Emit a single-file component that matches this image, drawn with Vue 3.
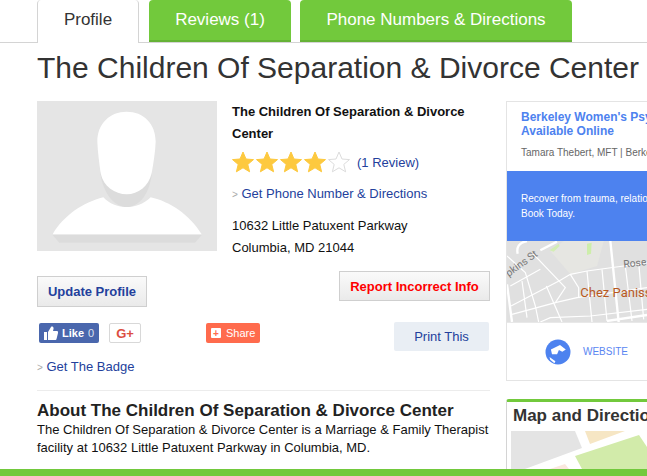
<script setup>
const stars = [1, 2, 3, 4, 5]
const starPoints = '11,1 14,8 21.5,8.6 15.8,13.4 17.6,20.8 11,16.8 4.4,20.8 6.2,13.4 0.5,8.6 8,8'
const tabs = ['Reviews (1)', 'Phone Numbers & Directions']
</script>

<template>
  <div class="page">
    <nav class="tabs">
      <a class="tab active">Profile</a>
      <a v-for="t in tabs" :key="t" class="tab green">{{ t }}</a>
    </nav>
    <h1 class="title">The Children Of Separation &amp; Divorce Center</h1>

    <div class="columns">
      <main class="main">
        <section class="summary">
          <svg class="photo" viewBox="51 18 540 450" width="180" height="150">
            <rect x="51" y="18" width="540" height="450" fill="#e5e5e5" />
            <path d="M98 418C130 362 190 322 250 307C270 328 295 336 320 336C345 336 370 328 392 307C450 320 510 360 545 418Z" fill="#fff" />
            <path d="M98 420H545L525 443H118Z" fill="#dcdcdc" />
            <path d="M240 230C250 300 285 336 320 336C355 336 390 300 396 230Z" fill="#dcdcdc" />
            <path d="M232 140C232 85 270 50 320 50C370 50 407 85 407 140C406 170 400 205 395 235C385 275 355 298 320 298C285 298 250 275 242 235C238 205 233 170 232 140Z" fill="#fff" />
          </svg>
          <div class="info">
            <div class="name">The Children Of Separation &amp; Divorce Center</div>
            <div class="rating">
              <svg v-for="s in stars" :key="s" class="star" viewBox="0 0 22 22" width="22" height="22">
                <polygon :points="starPoints" :fill="s < 5 ? '#fdc93f' : '#fff'" :stroke="s < 5 ? '#fdc93f' : '#dcdcdc'" />
              </svg>
              <a class="link review">(1 Review)</a>
            </div>
            <div class="more"><span class="caret">&gt;</span> <a class="link">Get Phone Number &amp; Directions</a></div>
            <div class="address">10632 Little Patuxent Parkway<br />Columbia, MD 21044</div>
          </div>
        </section>

        <div class="actions">
          <button class="btn update">Update Profile</button>
          <button class="btn report">Report Incorrect Info</button>
        </div>

        <div class="social">
          <span class="fb">
            <svg viewBox="0 0 14 14" width="14" height="14"><path d="M0 6H3V14H0ZM4 6L7 1C8 0 10 1 9.500 3L9 5H13C14 5 14.300 6 14 7L12.500 13C12.300 13.700 12 14 11 14H4Z" fill="#fff" /></svg>
            <b>Like</b><i>0</i>
          </span>
          <span class="gplus">G+</span>
          <span class="share"><em>+</em>Share</span>
          <button class="print">Print This</button>
        </div>

        <div class="badge"><span class="caret">&gt;</span> <a class="link">Get The Badge</a></div>

        <section class="about">
          <h2>About The Children Of Separation &amp; Divorce Center</h2>
          <p>The Children Of Separation &amp; Divorce Center is a Marriage &amp; Family Therapist facility at 10632 Little Patuxent Parkway in Columbia, MD.</p>
        </section>
      </main>

      <aside class="side">
        <div class="ad">
          <div class="ad-head">
            <div class="ad-title">Berkeley Women's Psychotherapy<br />Available Online</div>
            <div class="ad-by">Tamara Thebert, MFT | Berkeley, CA</div>
          </div>
          <div class="ad-blue">Recover from trauma, relationship issues and more.<br />Book Today.</div>
          <svg class="ad-map" viewBox="0 0 420 243" width="140" height="81">
            <rect width="420" height="243" fill="#e0e0e0" />
            <path d="M130 30L170 0H290L270 75L190 100Z" fill="#e6e6e2" />
            <path d="M128 28L155 8L158 15L140 32Z" fill="#d3eeb5" />
            <path d="M240 8L254 5L252 38L240 42Z" fill="#cdeeaa" />
            <g fill="none" stroke="#fff" stroke-width="3.500">
              <path d="M10 135L100 85" />
              <path d="M12 195L160 118L190 100L240 90L350 75L420 65" />
              <path d="M75 35L175 140L145 185L15 220" />
              <path d="M0 45L55 95L85 195L95 243" />
              <path d="M118 135L165 243" />
              <path d="M190 100L215 140L215 170" />
              <path d="M45 120L60 230" />
              <path d="M145 185L210 170L420 140" />
              <path d="M100 243L130 230L250 225L420 205" />
              <path d="M240 90L255 243" />
              <path d="M285 85L300 240" />
              <path d="M355 75L375 240" />
              <path d="M395 65L410 235" />
            </g>
            <g fill="none" stroke="#fff" stroke-width="7">
              <path d="M150 2L100 28" />
              <path d="M60 0C35 5 28 20 32 38" />
              <path d="M0 130L15 243" />
              <path d="M310 0L335 243" />
              <path d="M300 240L420 222" />
            </g>
            <text x="5" y="108" class="map-label" transform="rotate(-36 5 108)">pkins St</text>
            <text x="350" y="80" class="map-label" transform="rotate(-6 350 80)">Rose</text>
            <text x="220" y="168" class="map-place">Chez Panisse</text>
          </svg>
          <div class="ad-foot">
            <svg viewBox="0 0 26 26" width="26" height="26">
              <circle cx="13" cy="13" r="12.500" fill="#4d82ef" />
              <path d="M5.900 10.400L15 5.900L20.800 10.400L17.300 12.800L13.900 11.100L12.100 15.300H7ZM4.500 18L10.400 22.200L9.400 24.300L5.200 20.800Z" fill="#fff" />
            </svg>
            <span>WEBSITE</span>
          </div>
        </div>

        <div class="map-card">
          <h3>Map and Directions</h3>
          <svg class="mini-map" viewBox="0 0 136 38" width="136" height="38">
            <rect width="136" height="38" fill="#fff" />
            <path d="M0 0H64L71 17L14 38H0Z" fill="#e4e4e4" />
            <path d="M74 0H114L79 13Z" fill="#f6e6c4" />
            <path d="M64 25L128 4L136 16V38H71Z" fill="#d2ebaa" />
            <path d="M39 38L54 33L58 38Z" fill="#fae7de" />
          </svg>
        </div>
      </aside>
    </div>
    <div class="footer-bar"></div>
  </div>
</template>

<style>
html, body { margin: 0; overflow: hidden; }
</style>

<style scoped>
.page {
  position: relative;
  width: 647px;
  height: 476px;
  overflow: hidden;
  background: #fff;
  font-family: "Liberation Sans", Arial, sans-serif;
  color: #111;
}
.tabs {
  display: flex;
  height: 42px;
  padding-left: 37px;
  border-bottom: 1px solid #d4d4d4;
}
.tab {
  box-sizing: border-box;
  height: 43px;
  display: flex;
  align-items: center;
  justify-content: center;
  font-size: 17px;
  border-radius: 4px 4px 0 0;
  padding-bottom: 3px;
}
.active {
  width: 102px;
  border: 1px solid #d4d4d4;
  border-bottom: 0;
  border-top: 0;
  color: #333;
  background: #fff;
}
.green {
  height: 42px;
  background: #72c93c;
  color: #fff;
  box-shadow: inset 0 -2px 0 #65b236;
}
.green:nth-child(2) { width: 142px; margin-left: 10px; }
.green:nth-child(3) { width: 272px; margin-left: 9px; }
.title {
  margin: 0 0 0 37px;
  height: 58px;
  line-height: 50px;
  font-size: 30px;
  font-weight: 400;
  color: #333;
  white-space: nowrap;
}
.columns {
  display: flex;
  padding-left: 37px;
}
.main { width: 453px; flex: none; }
.summary { display: flex; gap: 15px; }
.photo { display: block; flex: none; }
.info { font-size: 13px; }
.name { font-weight: 700; line-height: 22px; margin-top: 0; }
.rating { display: flex; align-items: center; height: 22px; margin-top: 6px; }
.star { margin-right: 2px; flex: none; }
.review { margin-left: 5px; }
.link { color: #233f9c; }
.caret { color: #aaa; font-size: 10px; }
.more { line-height: 18px; margin-top: 12px; }
.address { line-height: 22px; margin-top: 11px; }
.actions {
  display: flex;
  justify-content: space-between;
  align-items: flex-start;
  margin-top: 12px;
}
.btn {
  font-family: inherit;
  font-weight: 700;
  font-size: 13px;
  background: linear-gradient(#fafafa, #eaeaea);
  border: 1px solid #cfcfcf;
  padding: 0;
}
.update { width: 110px; height: 31px; margin-top: 5px; color: #233f9c; }
.report { width: 151px; height: 30px; color: #f00; }
.social {
  display: flex;
  align-items: flex-start;
  margin-top: 15px;
  height: 29px;
}
.fb, .gplus, .share {
  box-sizing: border-box;
  height: 20px;
  margin-top: 1px;
  border-radius: 2px;
  display: flex;
  align-items: center;
  font-size: 11px;
}
.fb {
  width: 60px;
  margin-left: 2px;
  background: #4a67ad;
  color: #fff;
  padding-left: 5px;
  gap: 4px;
}
.fb i { font-style: normal; opacity: 0.8; }
.gplus {
  width: 32px;
  margin-left: 10px;
  justify-content: center;
  border: 1px solid #d8d8d8;
  color: #dc4e41;
  font-weight: 700;
  font-size: 13px;
}
.share {
  width: 54px;
  margin-left: 65px;
  background: #ff6b4d;
  color: #fff;
  padding-left: 5px;
  gap: 5px;
}
.share em {
  width: 10px;
  height: 10px;
  background: #fff;
  color: #ff6b4d;
  border-radius: 1px;
  display: flex;
  align-items: center;
  justify-content: center;
  font-style: normal;
  font-size: 10px;
  font-weight: 700;
}
.print {
  width: 95px;
  height: 29px;
  margin-left: auto;
  margin-right: 1px;
  background: #e9eef4;
  border: 0;
  border-radius: 2px;
  font-family: inherit;
  font-size: 13px;
  color: #233f9c;
  padding: 0;
}
.badge {
  margin-top: 7px;
  line-height: 18px;
  font-size: 13px;
  padding-bottom: 13px;
  border-bottom: 1px solid #ececec;
}
.about h2 {
  margin: 9px 0 0;
  font-size: 17px;
  line-height: 21px;
  color: #222;
}
.about p {
  margin: 0;
  font-size: 13px;
  line-height: 18px;
}
.side { margin-left: 16px; width: 300px; flex: none; }
.ad {
  box-sizing: border-box;
  height: 280px;
  border: 1px solid #e4e4e4;
  display: flex;
  flex-direction: column;
}
.ad-head { height: 69px; padding: 8px 14px 0; box-sizing: border-box; white-space: nowrap; }
.ad-title { font-size: 12px; line-height: 14px; font-weight: 700; color: #4d82ef; }
.ad-by { font-size: 10px; color: #666; margin-top: 9px; }
.ad-blue {
  height: 70px;
  box-sizing: border-box;
  padding-top: 20px;
  background: #4d82ef;
  color: #fff;
  font-size: 10px;
  line-height: 15px;
  padding-left: 14px;
  white-space: nowrap;
}
.ad-map { display: block; }
.map-label { font: 31px "Roboto", sans-serif; fill: #777; }
.map-place { font: 39px "Roboto", sans-serif; fill: #b8591e; }
.ad-foot {
  display: flex;
  align-items: center;
  padding-left: 38px;
  flex: 1;
  gap: 12px;
  border-top: 1px solid #e8e8e8;
  font-size: 10px;
  color: #5a86f2;
}
.map-card {
  margin-top: 18px;
  height: 77px;
  box-sizing: border-box;
  border-top: 3px solid #72c93c;
  border-left: 1px solid #d4d4d4;
  border-radius: 3px 0 0 0;
  padding: 3px 0 0 6px;
}
.map-card h3 {
  margin: 0;
  font-size: 17px;
  line-height: 22px;
  color: #333;
  white-space: nowrap;
}
.mini-map { display: block; margin: 4px 0 0 -2px; }
.footer-bar {
  position: absolute;
  left: 0;
  right: 0;
  bottom: 0;
  height: 7px;
  background: #72c93c;
}
</style>
